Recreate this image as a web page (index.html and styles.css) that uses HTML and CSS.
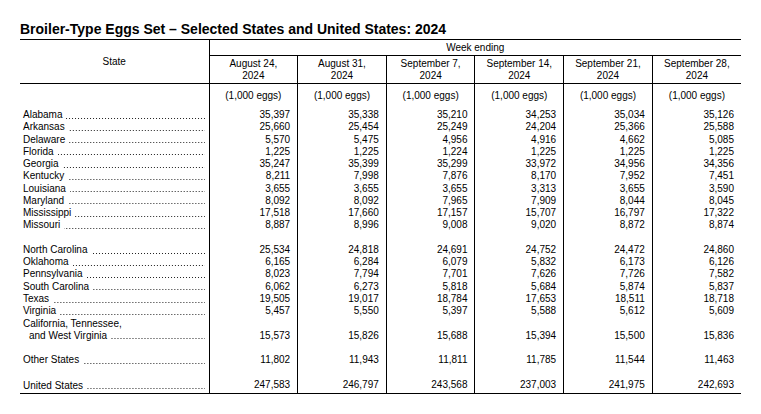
FILE: index.html
```html
<!DOCTYPE html>
<html>
<head>
<meta charset="utf-8">
<link rel="stylesheet" href="styles.css">
</head>
<body>
<h1 class="title">Broiler-Type Eggs Set – Selected States and United States: 2024</h1>
<table class="tbl">
  <colgroup>
    <col class="c-state">
    <col class="c-num"><col class="c-num"><col class="c-num"><col class="c-num"><col class="c-num"><col class="c-num">
  </colgroup>
  <thead>
    <tr class="r-week">
      <th class="h-state" rowspan="2">State</th>
      <th class="h-week" colspan="6">Week ending</th>
    </tr>
    <tr class="r-dates">
      <th class="h-date">August 24,<br>2024</th>
      <th class="h-date">August 31,<br>2024</th>
      <th class="h-date">September 7,<br>2024</th>
      <th class="h-date">September 14,<br>2024</th>
      <th class="h-date">September 21,<br>2024</th>
      <th class="h-date">September 28,<br>2024</th>
    </tr>
  </thead>
  <tbody>
    <tr class="r-units">
      <td class="st"></td>
      <td class="unit">(1,000 eggs)</td><td class="unit">(1,000 eggs)</td><td class="unit">(1,000 eggs)</td><td class="unit">(1,000 eggs)</td><td class="unit">(1,000 eggs)</td><td class="unit">(1,000 eggs)</td>
    </tr>
    <tr><td class="st"><div class="lead"><span class="nm">Alabama</span><span class="dots"></span></div></td><td class="n">35,397</td><td class="n">35,338</td><td class="n">35,210</td><td class="n">34,253</td><td class="n">35,034</td><td class="n">35,126</td></tr>
    <tr><td class="st"><div class="lead"><span class="nm">Arkansas</span><span class="dots"></span></div></td><td class="n">25,660</td><td class="n">25,454</td><td class="n">25,249</td><td class="n">24,204</td><td class="n">25,366</td><td class="n">25,588</td></tr>
    <tr><td class="st"><div class="lead"><span class="nm">Delaware</span><span class="dots"></span></div></td><td class="n">5,570</td><td class="n">5,475</td><td class="n">4,956</td><td class="n">4,916</td><td class="n">4,662</td><td class="n">5,085</td></tr>
    <tr><td class="st"><div class="lead"><span class="nm">Florida</span><span class="dots"></span></div></td><td class="n">1,225</td><td class="n">1,225</td><td class="n">1,224</td><td class="n">1,225</td><td class="n">1,225</td><td class="n">1,225</td></tr>
    <tr><td class="st"><div class="lead"><span class="nm">Georgia</span><span class="dots"></span></div></td><td class="n">35,247</td><td class="n">35,399</td><td class="n">35,299</td><td class="n">33,972</td><td class="n">34,956</td><td class="n">34,356</td></tr>
    <tr><td class="st"><div class="lead"><span class="nm">Kentucky</span><span class="dots"></span></div></td><td class="n">8,211</td><td class="n">7,998</td><td class="n">7,876</td><td class="n">8,170</td><td class="n">7,952</td><td class="n">7,451</td></tr>
    <tr><td class="st"><div class="lead"><span class="nm">Louisiana</span><span class="dots"></span></div></td><td class="n">3,655</td><td class="n">3,655</td><td class="n">3,655</td><td class="n">3,313</td><td class="n">3,655</td><td class="n">3,590</td></tr>
    <tr><td class="st"><div class="lead"><span class="nm">Maryland</span><span class="dots"></span></div></td><td class="n">8,092</td><td class="n">8,092</td><td class="n">7,965</td><td class="n">7,909</td><td class="n">8,044</td><td class="n">8,045</td></tr>
    <tr><td class="st"><div class="lead"><span class="nm">Mississippi</span><span class="dots"></span></div></td><td class="n">17,518</td><td class="n">17,660</td><td class="n">17,157</td><td class="n">15,707</td><td class="n">16,797</td><td class="n">17,322</td></tr>
    <tr><td class="st"><div class="lead"><span class="nm">Missouri</span><span class="dots"></span></div></td><td class="n">8,887</td><td class="n">8,996</td><td class="n">9,008</td><td class="n">9,020</td><td class="n">8,872</td><td class="n">8,874</td></tr>
    <tr class="blank"><td class="st"></td><td class="n"></td><td class="n"></td><td class="n"></td><td class="n"></td><td class="n"></td><td class="n"></td></tr>
    <tr><td class="st"><div class="lead"><span class="nm">North Carolina</span><span class="dots"></span></div></td><td class="n">25,534</td><td class="n">24,818</td><td class="n">24,691</td><td class="n">24,752</td><td class="n">24,472</td><td class="n">24,860</td></tr>
    <tr><td class="st"><div class="lead"><span class="nm">Oklahoma</span><span class="dots"></span></div></td><td class="n">6,165</td><td class="n">6,284</td><td class="n">6,079</td><td class="n">5,832</td><td class="n">6,173</td><td class="n">6,126</td></tr>
    <tr><td class="st"><div class="lead"><span class="nm">Pennsylvania</span><span class="dots"></span></div></td><td class="n">8,023</td><td class="n">7,794</td><td class="n">7,701</td><td class="n">7,626</td><td class="n">7,726</td><td class="n">7,582</td></tr>
    <tr><td class="st"><div class="lead"><span class="nm">South Carolina</span><span class="dots"></span></div></td><td class="n">6,062</td><td class="n">6,273</td><td class="n">5,818</td><td class="n">5,684</td><td class="n">5,874</td><td class="n">5,837</td></tr>
    <tr><td class="st"><div class="lead"><span class="nm">Texas</span><span class="dots"></span></div></td><td class="n">19,505</td><td class="n">19,017</td><td class="n">18,784</td><td class="n">17,653</td><td class="n">18,511</td><td class="n">18,718</td></tr>
    <tr><td class="st"><div class="lead"><span class="nm">Virginia</span><span class="dots"></span></div></td><td class="n">5,457</td><td class="n">5,550</td><td class="n">5,397</td><td class="n">5,588</td><td class="n">5,612</td><td class="n">5,609</td></tr>
    <tr><td class="st"><div class="lead"><span class="nm">California, Tennessee,</span></div></td><td class="n"></td><td class="n"></td><td class="n"></td><td class="n"></td><td class="n"></td><td class="n"></td></tr>
    <tr><td class="st"><div class="lead indent"><span class="nm">and West Virginia</span><span class="dots"></span></div></td><td class="n">15,573</td><td class="n">15,826</td><td class="n">15,688</td><td class="n">15,394</td><td class="n">15,500</td><td class="n">15,836</td></tr>
    <tr class="blank"><td class="st"></td><td class="n"></td><td class="n"></td><td class="n"></td><td class="n"></td><td class="n"></td><td class="n"></td></tr>
    <tr><td class="st"><div class="lead"><span class="nm">Other States</span><span class="dots"></span></div></td><td class="n">11,802</td><td class="n">11,943</td><td class="n">11,811</td><td class="n">11,785</td><td class="n">11,544</td><td class="n">11,463</td></tr>
    <tr class="blank"><td class="st"></td><td class="n"></td><td class="n"></td><td class="n"></td><td class="n"></td><td class="n"></td><td class="n"></td></tr>
    <tr class="last"><td class="st"><div class="lead"><span class="nm">United States</span><span class="dots"></span></div></td><td class="n">247,583</td><td class="n">246,797</td><td class="n">243,568</td><td class="n">237,003</td><td class="n">241,975</td><td class="n">242,693</td></tr>
  </tbody>
</table>
</body>
</html>
```

FILE: styles.css
```css
html, body {
  margin: 0;
  padding: 0;
  background: #fff;
}
body {
  font-family: "Liberation Sans", Arial, sans-serif;
  color: #000;
}
.title {
  margin: 21px 0 0 20px;
  font-size: 14px;
  line-height: 16px;
  font-weight: bold;
  letter-spacing: 0;
}
.tbl {
  margin: 2px 0 0 20px;
  border-collapse: collapse;
  table-layout: fixed;
  width: 721px;
  font-size: 10px;
  border-top: 1px solid #000;
  border-bottom: 1px solid #000;
}
.c-state { width: 189px; }
.c-num { width: 88.66px; }
.tbl th {
  font-weight: normal;
  padding: 0;
  line-height: 12px;
}
.h-state {
  border-right: 1px solid #000;
  border-bottom: 1px solid #000;
  vertical-align: middle;
  text-align: center;
}
.h-week {
  height: 15px;
  border-bottom: 1px solid #000;
  text-align: center;
  vertical-align: middle;
}
.h-date {
  height: 27px;
  padding: 1px 0 1px 0;
  border-left: 1px solid #000;
  border-bottom: 1px solid #000;
  text-align: center;
  vertical-align: middle;
}
.tbl td {
  padding: 0;
  line-height: 12.27px;
  height: 12.27px;
  vertical-align: middle;
}
.tbl td.st {
  border-right: 1px solid #000;
  padding: 0 4px 0 3px;
}
.tbl td.n,
.tbl td.unit {
  border-left: 1px solid #000;
  text-align: right;
  padding-right: 7px;
}
.tbl td.unit {
  text-align: center;
  padding: 0;
  vertical-align: middle;
}
.r-units td { height: 25px; }
.last td { padding-bottom: 2px; }
.lead {
  display: flex;
  white-space: nowrap;
  height: 12.27px;
}
.lead.indent { padding-left: 6px; }
.nm { flex: none; padding-right: 4px; }
.dots {
  flex: 1 1 auto;
  background-image: linear-gradient(to right, #222 0, #222 1px, transparent 1px, transparent 3px);
  background-size: 3px 1px;
  background-repeat: repeat-x;
  background-position: right 0 top 8.6px;
}
```
